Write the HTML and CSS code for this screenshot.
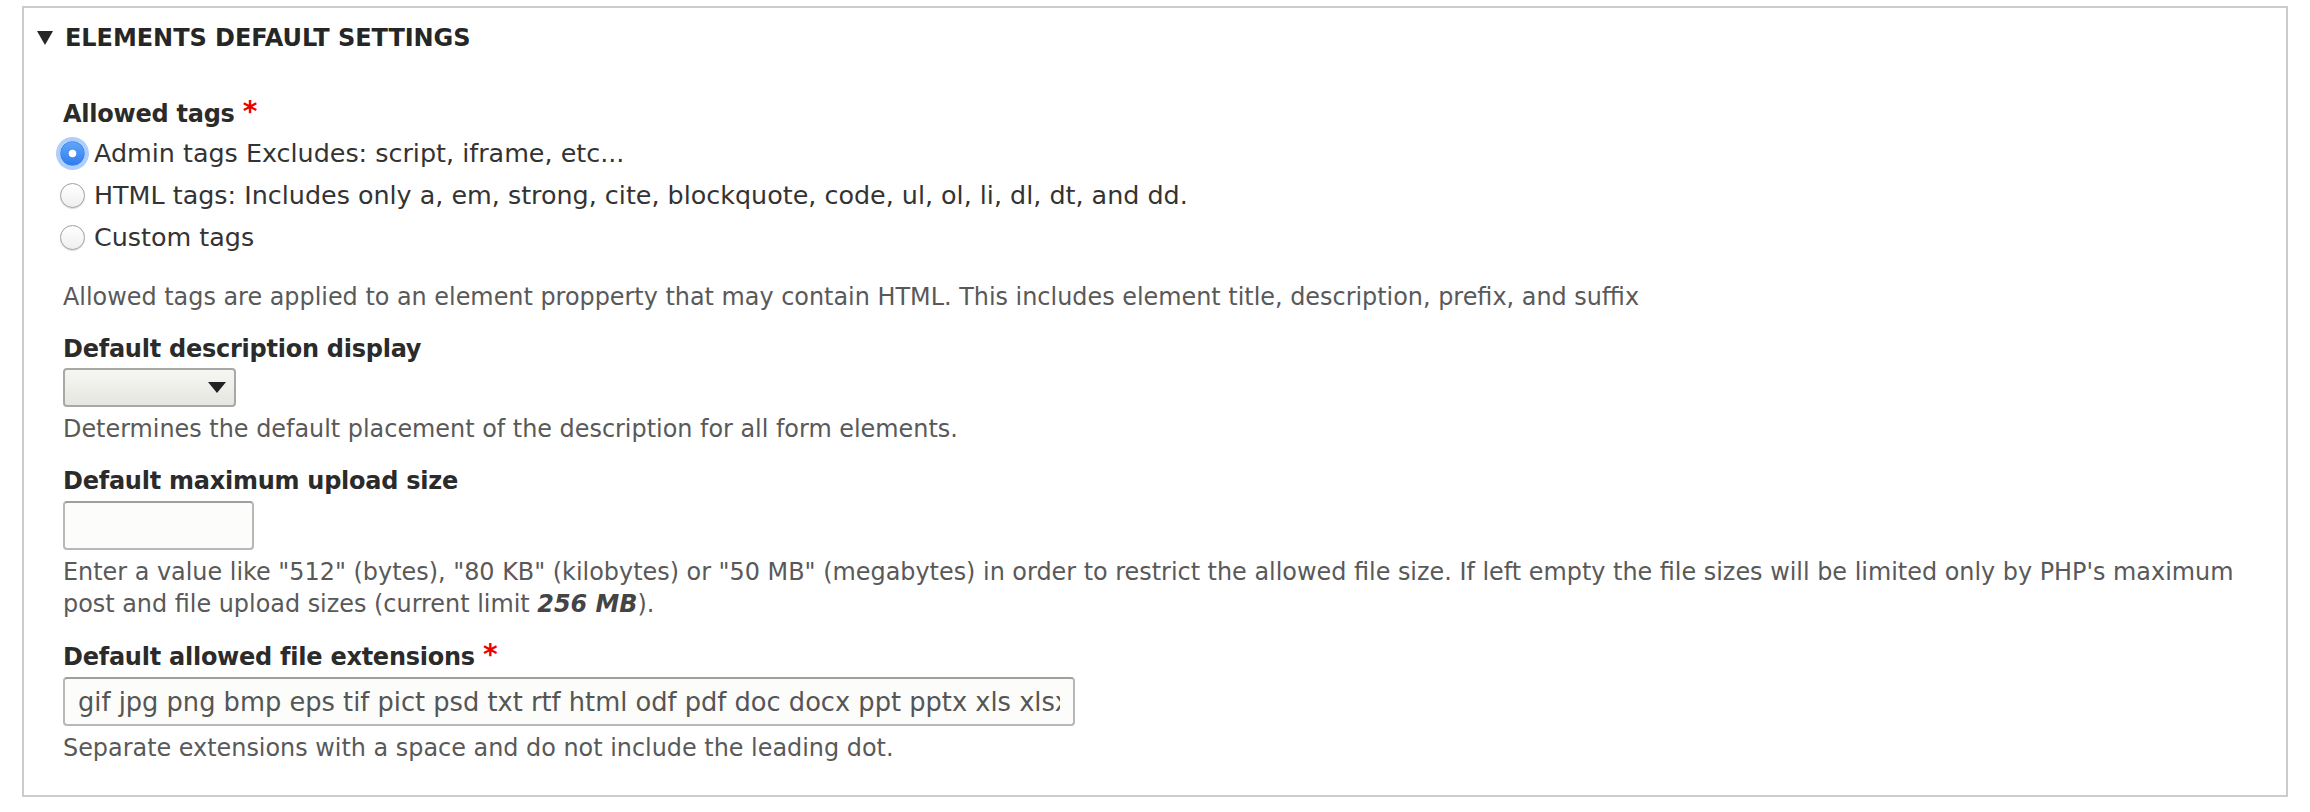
FILE: index.html
```html
<!DOCTYPE html>
<html lang="en">
<head>
  <meta charset="UTF-8">
  <meta name="viewport" content="width=device-width, initial-scale=1.0">
  <title>Elements default settings</title>
  <link rel="stylesheet" href="styles.css">
</head>
<body>
  <details class="settings" open>
    <summary class="settings-title"><span class="caret"></span>Elements default settings</summary>
    <div class="settings-body">

      <div class="form-item">
        <div class="label">Allowed tags <span class="required">*</span></div>
        <div class="radios">
          <label class="radio"><input type="radio" name="tags" checked><span>Admin tags Excludes: script, iframe, etc...</span></label>
          <label class="radio"><input type="radio" name="tags"><span>HTML tags: Includes only a, em, strong, cite, blockquote, code, ul, ol, li, dl, dt, and dd.</span></label>
          <label class="radio"><input type="radio" name="tags"><span>Custom tags</span></label>
        </div>
        <div class="description">Allowed tags are applied to an element propperty that may contain HTML. This includes element title, description, prefix, and suffix</div>
      </div>

      <div class="form-item">
        <label class="label" for="desc-display">Default description display</label>
        <div class="select-wrap">
          <select id="desc-display" class="select"><option></option></select>
          <svg class="select-arrow" width="18" height="11" viewBox="0 0 18 11"><path d="M0 0h18L9 11z" fill="#222"/></svg>
        </div>
        <div class="description">Determines the default placement of the description for all form elements.</div>
      </div>

      <div class="form-item">
        <label class="label" for="upload-size">Default maximum upload size</label>
        <input id="upload-size" class="text-input small" type="text">
        <div class="description">Enter a value like "512" (bytes), "80 KB" (kilobytes) or "50 MB" (megabytes) in order to restrict the allowed file size. If left empty the file sizes will be limited only by PHP's maximum post and file upload sizes (current limit <em>256 MB</em>).</div>
      </div>

      <div class="form-item">
        <label class="label" for="extensions">Default allowed file extensions <span class="required">*</span></label>
        <input id="extensions" class="text-input wide" type="text" value="gif jpg png bmp eps tif pict psd txt rtf html odf pdf doc docx ppt pptx xls xlsx xml avi mov mp3 mp4 ogg wav bz2 dmg gz jar rar sit svg tar zip">
        <div class="description">Separate extensions with a space and do not include the leading dot.</div>
      </div>

    </div>
  </details>
</body>
</html>
```

FILE: styles.css
```css
body {
  margin: 6px 22px;
  font-family: "DejaVu Sans", sans-serif;
  color: #333;
  background: #fff;
}
.settings {
  border: 2px solid #ccc;
  padding-bottom: 31px;
}
.settings-title {
  display: flex;
  align-items: center;
  list-style: none;
  padding: 15px 0 0 13px;
  font-size: 24px;
  line-height: 30px;
  font-weight: bold;
  letter-spacing: -0.05px;
  text-transform: uppercase;
  color: #262626;
  cursor: pointer;
}
.settings-title::-webkit-details-marker {
  display: none;
}
.caret {
  width: 0;
  height: 0;
  margin-right: 12px;
  border-left: 8px solid transparent;
  border-right: 8px solid transparent;
  border-top: 14px solid #262626;
}
.settings-body {
  padding: 45px 38px 0 39px;
}
.form-item {
  margin-top: 21px;
}
.form-item:first-child {
  margin-top: 0;
}
.label {
  display: block;
  font-size: 24px;
  line-height: 30px;
  font-weight: bold;
  letter-spacing: -0.25px;
  color: #2b2b2b;
  margin-bottom: 4px;
}
.required {
  color: #e00;
  font-size: 28px;
  position: relative;
  top: -1px;
}
.radios {
  margin: -1px 0 23px;
}
.radio {
  display: flex;
  align-items: center;
  height: 42px;
  font-size: 25.4px;
  color: #333;
}
.radio input {
  appearance: none;
  -webkit-appearance: none;
  flex: none;
  width: 25px;
  height: 25px;
  margin: 0 9px 0 -3px;
  border: 1px solid #a0a0a0;
  border-radius: 50%;
  background: linear-gradient(#ffffff, #efefef);
  box-shadow: 0 1px 1px rgba(0, 0, 0, 0.14);
}
.radio input:checked {
  border-color: #3a86ee;
  background: radial-gradient(circle, #fff 0 3.5px, transparent 4.2px), linear-gradient(#62a6fa, #2d7df1);
  box-shadow: 0 0 0 4px rgba(110, 165, 245, 0.55);
}
.description {
  font-size: 23.9px;
  line-height: 32px;
  color: #595959;
  margin-top: 6px;
}
.description em {
  font-weight: bold;
  color: #444;
}
.select-wrap {
  position: relative;
  width: 173px;
  margin-top: 2px;
}
.select {
  appearance: none;
  -webkit-appearance: none;
  display: block;
  width: 173px;
  height: 39px;
  border: 2px solid #a8a8a8;
  border-radius: 4px;
  background: linear-gradient(#f6f6f3, #e6e6e0);
}
.select-arrow {
  position: absolute;
  right: 10px;
  top: 14px;
}
.text-input {
  display: block;
  box-sizing: border-box;
  height: 49px;
  margin-top: 5px;
  padding: 0 13px;
  border: 2px solid #b8b8b8;
  border-top-color: #9f9f9f;
  border-radius: 4px;
  background: #fcfcfa;
  font-family: "DejaVu Sans", sans-serif;
  font-size: 25.7px;
  color: #555;
}
.text-input.small {
  width: 191px;
}
.text-input.wide {
  width: 1012px;
}
```
